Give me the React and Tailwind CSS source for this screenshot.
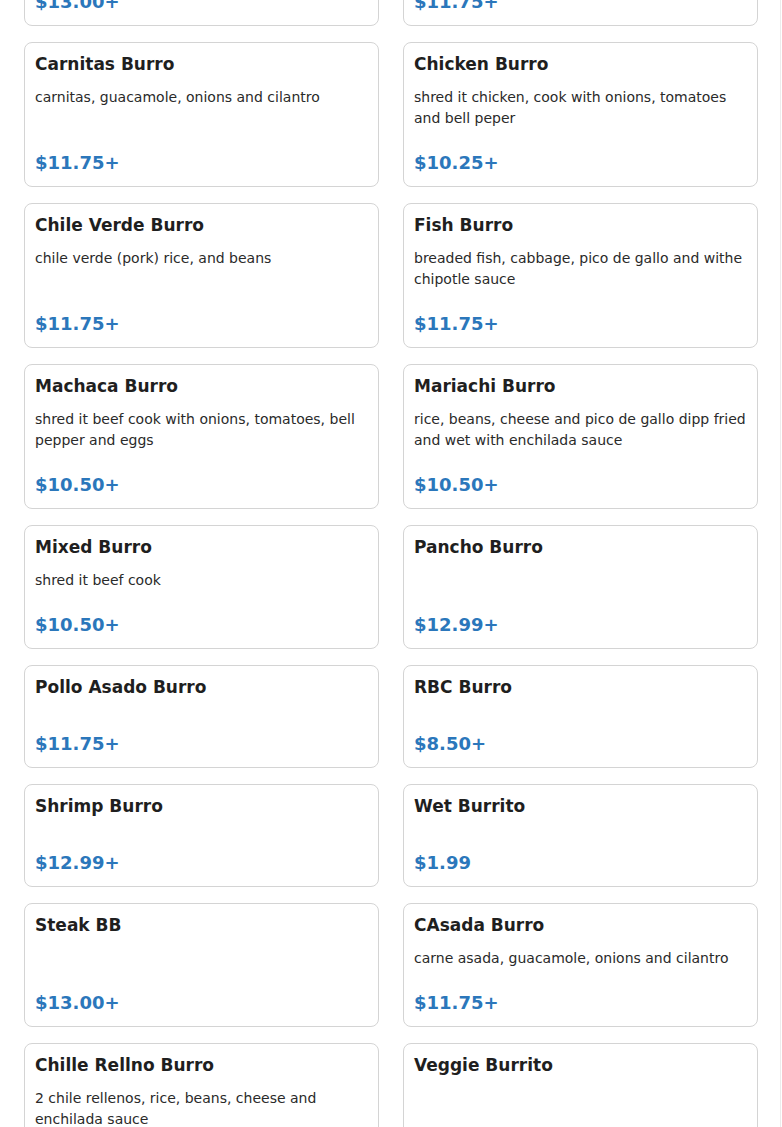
import React from 'react';

const items = [
  { name: 'Steak Burro', desc: '', price: '$13.00+' },
  { name: 'Carne Asada Burro', desc: '', price: '$11.75+' },
  { name: 'Carnitas Burro', desc: 'carnitas, guacamole, onions and cilantro', price: '$11.75+' },
  { name: 'Chicken Burro', desc: 'shred it chicken, cook with onions, tomatoes and bell peper', price: '$10.25+' },
  { name: 'Chile Verde Burro', desc: 'chile verde (pork) rice, and beans', price: '$11.75+' },
  { name: 'Fish Burro', desc: 'breaded fish, cabbage, pico de gallo and withe chipotle sauce', price: '$11.75+' },
  { name: 'Machaca Burro', desc: 'shred it beef cook with onions, tomatoes, bell pepper and eggs', price: '$10.50+' },
  { name: 'Mariachi Burro', desc: 'rice, beans, cheese and pico de gallo dipp fried and wet with enchilada sauce', price: '$10.50+' },
  { name: 'Mixed Burro', desc: 'shred it beef cook', price: '$10.50+' },
  { name: 'Pancho Burro', desc: '', price: '$12.99+' },
  { name: 'Pollo Asado Burro', desc: '', price: '$11.75+' },
  { name: 'RBC Burro', desc: '', price: '$8.50+' },
  { name: 'Shrimp Burro', desc: '', price: '$12.99+' },
  { name: 'Wet Burrito', desc: '', price: '$1.99' },
  { name: 'Steak BB', desc: '', price: '$13.00+' },
  { name: 'CAsada Burro', desc: 'carne asada, guacamole, onions and cilantro', price: '$11.75+' },
  { name: 'Chille Rellno Burro', desc: '2 chile rellenos, rice, beans, cheese and enchilada sauce', price: '$12.50+' },
  { name: 'Veggie Burrito', desc: '', price: '$10.99+' },
];

const Card = ({ item }) => (
  <div className="flex flex-col rounded-lg border border-[#d4d4d4] bg-white px-[10px] pt-[10px] pb-[12px]">
    <h3 className="text-[17px] leading-[22px] font-bold text-[#1f1f1f]">{item.name}</h3>
    <p className="mt-[12px] mb-[23px] flex-1 text-[14px] leading-[21px] text-[#2a2a2a]">{item.desc}</p>
    <div className="text-[18px] leading-[22px] font-bold text-[#2b77bb]">{item.price}</div>
  </div>
);

export default function App() {
  return (
    <div className="relative h-[1127px] overflow-hidden bg-white" style={{ fontFamily: '"DejaVu Sans", sans-serif' }}>
      <div className="px-6">
        <div className="-mt-[77px] grid grid-cols-2 gap-x-6 gap-y-4">
          {items.map((item, i) => (
            <Card key={i} item={item} />
          ))}
        </div>
      </div>
      {/* scroll track edge */}
      <div className="absolute top-0 right-[1px] w-px h-full bg-[#ececec]" />
    </div>
  );
}
